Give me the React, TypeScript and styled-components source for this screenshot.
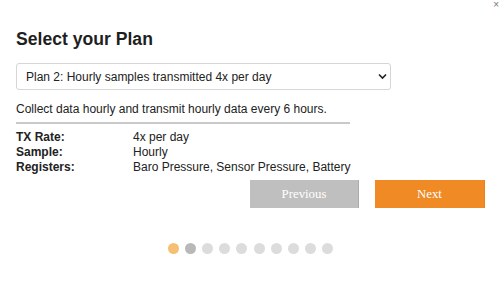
import React from "react";
import styled, { createGlobalStyle } from "styled-components";

const Global = createGlobalStyle`
  html, body { margin: 0; padding: 0; background: #fff; }
  body { font-family: "Liberation Sans", Arial, sans-serif; color: #222; }
`;

const Modal = styled.div`
  position: relative;
  width: 500px;
  height: 282px;
  box-sizing: border-box;
  padding: 29px 15px 0 16px;
  overflow: hidden;
`;

const Close = styled.span`
  position: absolute;
  top: 0;
  right: 1px;
  font-size: 10px;
  line-height: 9px;
  color: #777;
`;

const Title = styled.h2`
  margin: 0;
  font-size: 17.6px;
  line-height: 20px;
  font-weight: bold;
  color: #1f1f1f;
`;

const SelectWrap = styled.div`
  position: relative;
  width: 375px;
  height: 27px;
  margin-top: 14px;
`;

const Select = styled.select`
  appearance: none;
  -webkit-appearance: none;
  width: 100%;
  height: 100%;
  box-sizing: border-box;
  border: 1px solid #d6d6d6;
  border-radius: 3px;
  background: #fff;
  padding: 0 24px 0 9px;
  font-family: "Liberation Sans", Arial, sans-serif;
  font-size: 12px;
  color: #222;
  outline: none;
`;

const Chevron = styled.svg`
  position: absolute;
  right: 4px;
  top: 10px;
  pointer-events: none;
`;

const Description = styled.p`
  margin: 12px 0 0;
  font-size: 12px;
  line-height: 14px;
  color: #222;
`;

const Rule = styled.hr`
  width: 334px;
  margin: 6px 0 0;
  border: none;
  height: 2px;
  background: #c9c9c9;
`;

const Details = styled.div`
  display: grid;
  grid-template-columns: 117px auto;
  margin-top: 6px;
  font-size: 12px;
  line-height: 15.2px;
`;

const Label = styled.span`
  font-weight: bold;
`;

const Value = styled.span``;

const Actions = styled.div`
  display: flex;
  justify-content: flex-end;
  gap: 16px;
  margin-top: 4.4px;
`;

const Button = styled.button<{ $primary?: boolean }>`
  width: ${(p) => (p.$primary ? "110px" : "109px")};
  height: 28px;
  border: none;
  border-right: 1px solid ${(p) => (p.$primary ? "#e8841f" : "#acacac")};
  background: ${(p) => (p.$primary ? "#ef8a25" : "#bfbfbf")};
  color: #fff;
  font-family: "Liberation Serif", "Times New Roman", serif;
  font-size: 12.8px;
  padding: 0;
  cursor: pointer;
`;

const Dots = styled.div`
  display: flex;
  justify-content: center;
  gap: 6.2px;
  margin-top: 35px;
`;

const Dot = styled.span<{ $color: string }>`
  width: 11px;
  height: 11px;
  border-radius: 50%;
  background: ${(p) => p.$color};
`;

const dotColors = [
  "#f5bf74",
  "#b8b8b8",
  "#dcdcdc",
  "#dcdcdc",
  "#dcdcdc",
  "#dcdcdc",
  "#dcdcdc",
  "#dcdcdc",
  "#dcdcdc",
  "#dcdcdc",
];

export default function App() {
  return (
    <>
      <Global />
      <Modal>
        <Close>×</Close>
        <Title>Select your Plan</Title>
        <SelectWrap>
          <Select defaultValue="2">
            <option value="1">Plan 1: Hourly samples transmitted 1x per day</option>
            <option value="2">Plan 2: Hourly samples transmitted 4x per day</option>
          </Select>
          <Chevron width="9" height="7" viewBox="0 0 9 7">
            <path d="M1 1.5 L4.5 5 L8 1.5" fill="none" stroke="#222" strokeWidth="1.6" />
          </Chevron>
        </SelectWrap>
        <Description>Collect data hourly and transmit hourly data every 6 hours.</Description>
        <Rule />
        <Details>
          <Label>TX Rate:</Label>
          <Value>4x per day</Value>
          <Label>Sample:</Label>
          <Value>Hourly</Value>
          <Label>Registers:</Label>
          <Value>Baro Pressure, Sensor Pressure, Battery</Value>
        </Details>
        <Actions>
          <Button>Previous</Button>
          <Button $primary>Next</Button>
        </Actions>
        <Dots>
          {dotColors.map((c, i) => (
            <Dot key={i} $color={c} />
          ))}
        </Dots>
      </Modal>
    </>
  );
}
